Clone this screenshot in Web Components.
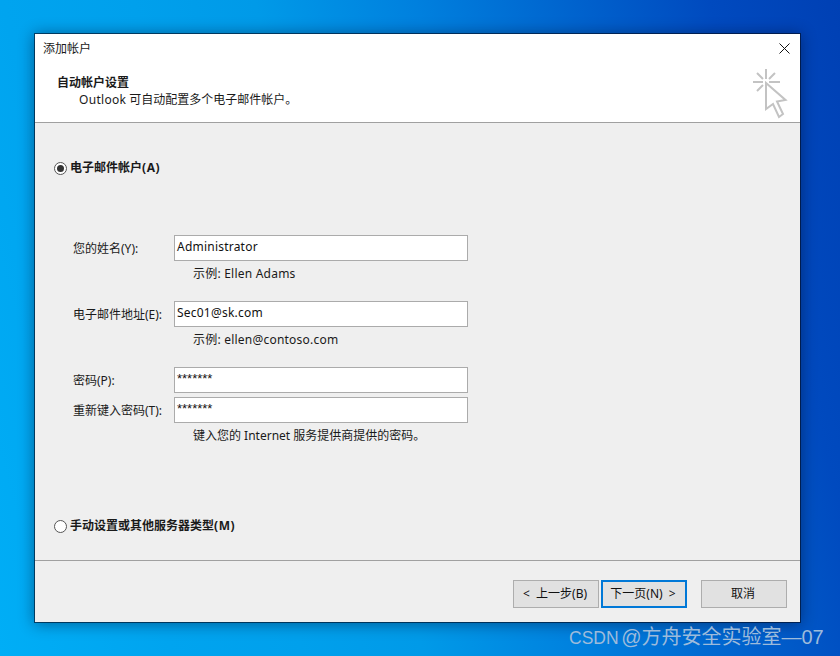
<!DOCTYPE html>
<html lang="zh"><head><meta charset="utf-8"><title>添加帐户</title>
<style>
html,body{margin:0;padding:0;width:840px;height:656px;overflow:hidden}
body{font:12px "Noto Sans","Noto Sans CJK SC",sans-serif;color:#1a1a1a}
x-radio span{letter-spacing:.6px}
</style></head><body>
<x-desktop>
  <x-window>
    <x-field-group>
      <x-radio slot="first" checked>电子邮件帐户<span>(A)</span></x-radio>
      <x-field ls label="您的姓名(Y):" value="Administrator" hint="示例: Ellen Adams"></x-field>
      <x-field ls label="电子邮件地址(E):" value="Sec01@sk.com" hint="示例: ellen@contoso.com"></x-field>
      <x-field stars label="密码(P):" value="*******" tight></x-field>
      <x-field stars label="重新键入密码(T):" value="*******" hint="键入您的 Internet 服务提供商提供的密码。"></x-field>
      <x-radio slot="last">手动设置或其他服务器类型<span>(M)</span></x-radio>
    </x-field-group>
    <x-btn slot="footer">&lt;&nbsp; 上一步(B)</x-btn>
    <x-btn slot="footer" primary>下一页(N)&nbsp; &gt;</x-btn>
    <x-btn slot="footer" cancel>取消</x-btn>
  </x-window>
</x-desktop>
<script>
function def(name, css, html){
  customElements.define(name, class extends HTMLElement{
    constructor(){super();this.attachShadow({mode:'open'}).innerHTML='<style>'+css+'</style>'+(typeof html==='function'?html(this):html);}
  });
}
def('x-desktop',`
:host{display:block;position:relative;width:840px;height:656px;overflow:hidden;
background:linear-gradient(75.5deg,#00aef6 0%,#00a4ef 17%,#00a0ec 30%,#009ae8 42%,#0080de 58%,#0060cc 75%,#004abf 87%,#0040b4 100%);}
.mark{position:absolute;left:569px;top:625px;font:20px/24px "Liberation Sans","Noto Sans CJK SC",sans-serif;color:#9dbbdb;white-space:nowrap;word-spacing:-3px}
.mark span{font-size:17.5px}
`,`<slot></slot><div class="mark"><span>CSDN</span> @方舟安全实验室—07</div>`);

def('x-window',`
:host{display:flex;flex-direction:column;position:absolute;left:34px;top:33px;width:765px;height:588px;border:1px solid rgba(0,10,30,.6);background:#efefef;background-clip:padding-box;box-shadow:0 1px 14px rgba(0,10,40,.45)}
.top{background:#fff;height:88px;flex:none;border-bottom:1px solid #a0a0a0;display:flex;flex-direction:column}
.title{height:28px;padding:7px 0 0 8px;box-sizing:border-box;display:flex;justify-content:space-between;line-height:16px}
.title svg{margin:2px 10px 0 0;flex:none}
.head{display:flex;justify-content:space-between;flex:1}
.h1{font-weight:700;line-height:16px;margin:13px 0 0 22px}
.h2{line-height:16px;margin:1px 0 0 44px}
.h2 span{letter-spacing:.3px}
.cursor{margin:5px 12px 0 0;flex:none}
.body{flex:1;min-height:0;box-sizing:border-box;border-bottom:1px solid #a0a0a0}
.foot{height:61px;flex:none;display:flex;padding:19px 12px 0 478px;box-sizing:border-box;gap:2px}
`,`<div class="top">
 <div class="title"><span>添加帐户</span><svg width="11" height="11" viewBox="0 0 11 11"><path d="M.5.5l10 10M10.500.5l-10 10" stroke="#111" stroke-width="1" fill="none"/></svg></div>
 <div class="head"><div><div class="h1">自动帐户设置</div><div class="h2"><span>Outlook</span> 可自动配置多个电子邮件帐户。</div></div>
 <svg class="cursor" width="36" height="52" viewBox="752 67 36 52" fill="none" stroke="#c3c3c3" stroke-width="2">
  <path d="M766 69v10M753 82h10M769 82h11M757 73l6 6M775 73l-6 6M757 91l6-6"/>
  <path d="M766 83v26l7-5 6 13 4-3-6-12.500 8.500-1.500z"/>
 </svg></div>
</div>
<div class="body"><slot></slot></div>
<div class="foot"><slot name="footer"></slot></div>`);

def('x-field-group',`
:host{display:flex;flex-direction:column;height:100%;padding:38px 0 0 19px;box-sizing:border-box}
.fields{padding:60px 0 0 19px;flex:1}
`,`<slot name="first"></slot><div class="fields"><slot></slot></div><div><slot name="last"></slot></div>`);

def('x-radio',`
:host{display:flex;align-items:center;gap:3px;height:14px;font-weight:700;line-height:14px;white-space:nowrap}
:host([slot=last]){margin-bottom:27px}
i{width:11px;height:11px;border:1px solid #555;border-radius:50%;background:#fff;display:grid;place-items:center;flex:none}
:host([checked]) i::after{content:"";width:7px;height:7px;border-radius:50%;background:#333}
`,`<i></i><div><slot></slot></div>`);

def('x-field',`
:host{display:grid;grid-template-columns:101px 294px;margin-bottom:19px;line-height:16px}
:host([tight]){margin-bottom:4px}
.l{align-self:center;white-space:nowrap;padding-top:1px}
.v{height:26px;box-sizing:border-box;border:1px solid #ababab;background:#fff;padding:3px 2px 0;color:#111;white-space:nowrap}
:host([ls]) .v,:host([ls]) .h{letter-spacing:.22px}
:host([stars]) .v{font:13px/16px "Liberation Sans",sans-serif}
.h{grid-column:2;margin:5px 0 0 19px;white-space:nowrap}
`,el=>{const h=el.getAttribute('hint');return `<div class="l">${el.getAttribute('label')}</div><div class="v">${el.getAttribute('value')}</div>${h?`<div class="h">${h}</div>`:''}`;});

def('x-btn',`
:host{display:flex;align-items:center;justify-content:center;width:86px;height:28px;box-sizing:border-box;border:1px solid #adadad;background:#e1e1e1;color:#111;line-height:16px;white-space:nowrap;padding-right:2px}
:host([primary]){border:2px solid #0078d7}
:host([cancel]){margin-left:12px}
`,`<slot></slot>`);
</script>
</body></html>
